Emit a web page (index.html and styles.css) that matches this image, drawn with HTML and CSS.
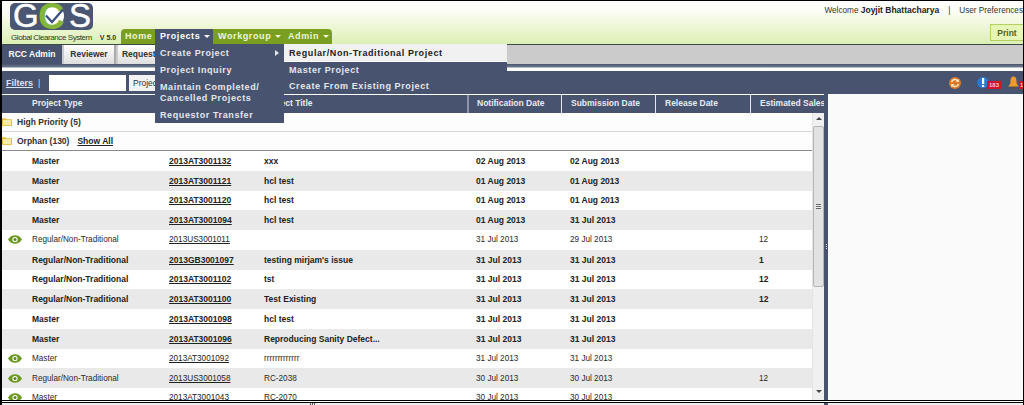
FILE: index.html
```html
<!DOCTYPE html>
<html lang="en">
<head>
<meta charset="utf-8">
<title>Global Clearance System</title>
<link rel="stylesheet" href="styles.css">
</head>
<body>
<div class="frame">
  <header class="top">
    <div class="brand">
      <svg class="logo" viewBox="0 0 83 27" width="83" height="27" aria-label="GCS logo">
        <rect x="0" y="0" width="83" height="27" rx="5" fill="#4a5672"/>
        <text x="3" y="24" class="logo-l">G</text>
        <circle cx="42" cy="13" r="12" fill="#fff"/>
        <text x="28" y="26" class="logo-c">C</text>
        <text x="59" y="24" class="logo-l">S</text>
        <path d="M36 12.500 L42 19 L53 6.500" fill="none" stroke="#39507f" stroke-width="2.200"/>
      </svg>
      <div class="brand-line"><span class="brand-name">Global Clearance System</span><span class="version">V 5.0</span></div>
    </div>
    <nav class="nav">
      <span class="nav-item nav-first">Home</span>
      <div class="nav-item nav-open">Projects <i class="caret"></i>
        <ul class="menu">
          <li class="menu-row">Create Project<i class="arrow"></i></li>
          <li>Project Inquiry</li>
          <li>Maintain Completed/<br>Cancelled Projects</li>
          <li>Requestor Transfer</li>
        </ul>
        <ul class="submenu">
          <li class="sub-active">Regular/Non-Traditional Project</li>
          <li>Master Project</li>
          <li>Create From Existing Project</li>
        </ul>
      </div>
      <span class="nav-item nav-work">Workgroup <i class="caret"></i></span>
      <span class="nav-item nav-last">Admin <i class="caret"></i></span>
    </nav>
    <div class="user">
      <div class="welcome">Welcome <b>Joyjit Bhattacharya</b><span class="pipe">|</span>User Preferences</div>
      <button class="print">Print</button>
    </div>
  </header>

  <div class="tabs">
    <span class="tab tab-active">RCC Admin</span>
    <span class="tab">Reviewer</span>
    <span class="tab">Requestor</span>
  </div>
  <div class="tabline"></div>

  <div class="filters">
    <a class="filter-link">Filters</a><span class="filter-sep">|</span>
    <input class="filter-input" type="text">
    <span class="filter-select">Project Type</span>
    <div class="alerts">
      <svg class="ico-refresh" width="12" height="12" viewBox="0 0 12 12"><circle cx="6" cy="6" r="6" fill="#d9792a"/><path d="M2.600 5.200A3.500 3.500 0 0 1 8.800 3.800M9.400 6.800A3.500 3.500 0 0 1 3.200 8.200" fill="none" stroke="#fbe7c8" stroke-width="1.500"/><path d="M9.800 1.800V5H6.800ZM2.200 10.200V7H5.200Z" fill="#fbe7c8"/></svg>
      <span class="alert">
        <svg width="12" height="13" viewBox="0 0 12 13"><circle cx="6" cy="6.500" r="5.800" fill="#2f78d0"/><rect x="5" y="2" width="2.200" height="6" fill="#fff"/><rect x="5" y="9" width="2.200" height="2" fill="#fff"/></svg>
        <em class="badge">183</em>
      </span>
      <span class="alert alert-bell">
        <svg width="13" height="13" viewBox="0 0 13 13"><path d="M6.500 0.500C4 .5 3.500 3 3.500 5.500C3.500 8 2.500 9 1 10.500H12C10.500 9 9.500 8 9.500 5.500C9.500 3 9 .5 6.500 .5Z" fill="#ef9a2c"/><rect x="5" y="11" width="3" height="1.500" fill="#7a4a14"/></svg>
        <em class="badge">1</em>
      </span>
    </div>
  </div>

  <main class="content">
    <section class="grid">
      <div class="cols head">
        <span></span><span>Project Type</span><span></span><span>Project Title</span>
        <span class="sep sep-grey">Notification Date</span><span class="sep">Submission Date</span><span class="sep">Release Date</span><span class="sep">Estimated Sales</span>
      </div>
      <div class="grid-body">
        <div class="rows">
          <div class="group"><svg class="folder" width="10" height="9" viewBox="0 0 10 9"><path d="M0 1.200H3.500L4.500 2.200H10V9H0Z" fill="#e9b944"/><rect x="1" y="3" width="8" height="5.200" fill="#fbe9a6"/></svg>High Priority (5)</div>
          <div class="group group-last"><svg class="folder" width="10" height="9" viewBox="0 0 10 9"><path d="M0 1.200H3.500L4.500 2.200H10V9H0Z" fill="#e9b944"/><rect x="1" y="3" width="8" height="5.200" fill="#fbe9a6"/></svg>Orphan (130)<a class="show-all">Show All</a></div>
          <div class="list">
            <div class="cols row strong"><span></span><span>Master</span><u>2013AT3001132</u><span>xxx</span><span class="d">02 Aug 2013</span><span class="d">02 Aug 2013</span><span></span><span></span></div>
            <div class="cols row strong"><span></span><span>Master</span><u>2013AT3001121</u><span>hcl test</span><span class="d">01 Aug 2013</span><span class="d">01 Aug 2013</span><span></span><span></span></div>
            <div class="cols row strong"><span></span><span>Master</span><u>2013AT3001120</u><span>hcl test</span><span class="d">01 Aug 2013</span><span class="d">01 Aug 2013</span><span></span><span></span></div>
            <div class="cols row strong"><span></span><span>Master</span><u>2013AT3001094</u><span>hcl test</span><span class="d">01 Aug 2013</span><span class="d">31 Jul 2013</span><span></span><span></span></div>
            <div class="cols row"><span class="eye"><svg width="14" height="9" viewBox="0 0 14 9"><path d="M0 4.500C3 -1.200 11 -1.200 14 4.500C11 10.200 3 10.200 0 4.500Z" fill="#6f9a22"/><circle cx="7" cy="4.500" r="2.600" fill="#fff"/><circle cx="7" cy="4.500" r="1.500" fill="#5c8418"/></svg></span><span>Regular/Non-Traditional</span><u>2013US3001011</u><span></span><span class="d">31 Jul 2013</span><span class="d">29 Jul 2013</span><span></span><span class="n">12</span></div>
            <div class="cols row strong"><span></span><span>Regular/Non-Traditional</span><u>2013GB3001097</u><span>testing mirjam's issue</span><span class="d">31 Jul 2013</span><span class="d">31 Jul 2013</span><span></span><span class="n">1</span></div>
            <div class="cols row strong"><span></span><span>Regular/Non-Traditional</span><u>2013AT3001102</u><span>tst</span><span class="d">31 Jul 2013</span><span class="d">31 Jul 2013</span><span></span><span class="n">12</span></div>
            <div class="cols row strong"><span></span><span>Regular/Non-Traditional</span><u>2013AT3001100</u><span>Test Existing</span><span class="d">31 Jul 2013</span><span class="d">31 Jul 2013</span><span></span><span class="n">12</span></div>
            <div class="cols row strong"><span></span><span>Master</span><u>2013AT3001098</u><span>hcl test</span><span class="d">31 Jul 2013</span><span class="d">31 Jul 2013</span><span></span><span></span></div>
            <div class="cols row strong"><span></span><span>Master</span><u>2013AT3001096</u><span>Reproducing Sanity Defect...</span><span class="d">31 Jul 2013</span><span class="d">31 Jul 2013</span><span></span><span></span></div>
            <div class="cols row"><span class="eye"><svg width="14" height="9" viewBox="0 0 14 9"><path d="M0 4.500C3 -1.200 11 -1.200 14 4.500C11 10.200 3 10.200 0 4.500Z" fill="#6f9a22"/><circle cx="7" cy="4.500" r="2.600" fill="#fff"/><circle cx="7" cy="4.500" r="1.500" fill="#5c8418"/></svg></span><span>Master</span><u>2013AT3001092</u><span>rrrrrrrrrrrrr</span><span class="d">31 Jul 2013</span><span class="d">31 Jul 2013</span><span></span><span></span></div>
            <div class="cols row"><span class="eye"><svg width="14" height="9" viewBox="0 0 14 9"><path d="M0 4.500C3 -1.200 11 -1.200 14 4.500C11 10.200 3 10.200 0 4.500Z" fill="#6f9a22"/><circle cx="7" cy="4.500" r="2.600" fill="#fff"/><circle cx="7" cy="4.500" r="1.500" fill="#5c8418"/></svg></span><span>Regular/Non-Traditional</span><u>2013US3001058</u><span>RC-2038</span><span class="d">30 Jul 2013</span><span class="d">30 Jul 2013</span><span></span><span class="n">12</span></div>
            <div class="cols row"><span class="eye"><svg width="14" height="9" viewBox="0 0 14 9"><path d="M0 4.500C3 -1.200 11 -1.200 14 4.500C11 10.200 3 10.200 0 4.500Z" fill="#6f9a22"/><circle cx="7" cy="4.500" r="2.600" fill="#fff"/><circle cx="7" cy="4.500" r="1.500" fill="#5c8418"/></svg></span><span>Master</span><u>2013AT3001043</u><span>RC-2070</span><span class="d">30 Jul 2013</span><span class="d">30 Jul 2013</span><span></span><span></span></div>
          </div>
        </div>
        <div class="scrollbar">
          <i class="sb-up"></i>
          <div class="sb-thumb"><i class="sb-grip"></i></div>
          <i class="sb-down"></i>
        </div>
      </div>
    </section>
    <div class="splitter"></div>
    <aside class="side"></aside>
  </main>
  <footer class="foot"></footer>
</div>
</body>
</html>
```

FILE: styles.css
```css
* { box-sizing: border-box; }
html, body { margin: 0; height: 405px; overflow: hidden; background: #fff; }
body { font: 8.500px "Liberation Sans", Arial, sans-serif; color: #222; }
ul { list-style: none; margin: 0; padding: 0; }

.frame {
  width: 1024px; height: 405px;
  border-top: 1px solid #000; border-left: 2px solid #000; border-right: 1px solid #000;
  display: flex; flex-direction: column; overflow: hidden;
}

/* header */
.top {
  height: 43px; flex: none; display: flex; align-items: flex-end;
  background: linear-gradient(#fff 0%, #fbfdf3 25%, #dcefb4 100%);
}
.brand { width: 119px; flex: none; align-self: stretch; padding: 2px 0 0 8px; }
.logo { display: block; }
.logo-l { font: 400 33px "Liberation Sans", sans-serif; fill: #fff; stroke: #fff; stroke-width: .5px; }
.logo-c { font: 700 37px "Liberation Sans", sans-serif; fill: #83b53a; }
.brand-line { display: flex; align-items: baseline; margin: 3px 0 0 1px; white-space: nowrap; }
.brand-name { font-size: 8px; letter-spacing: -.43px; color: #2c3a2a; }
.version { font-size: 7px; font-weight: 700; margin-left: 8px; color: #333; }

.nav { display: flex; height: 15px; color: #fff; font-weight: 700; font-size: 9px; letter-spacing: .6px; }
.nav-item { display: block; height: 15px; line-height: 15px; padding: 0 5px; background: #7a9f20; position: relative; white-space: nowrap; color: #eef6d8; }
.nav-first { border-radius: 4px 0 0 0; width: 34px; padding: 0 0 0 4px; }
.nav-work { width: 69px; padding: 0 0 0 5px; }
.nav-last { border-radius: 0 4px 0 0; width: 50px; padding: 0 0 0 6px; }
.nav-open { background: #47536f; color: #fff; width: 58px; }
.caret { display: inline-block; width: 0; height: 0; border: 3px solid transparent; border-top: 3.500px solid currentColor; border-bottom: 0; vertical-align: 1px; margin-left: 1px; }

.menu, .submenu { position: absolute; top: 15px; background: #47536f; z-index: 5; color: #e4e7ee; font-size: 9px; line-height: 11px; letter-spacing: .6px; }
.menu { left: 0; width: 129px; padding: .5px 0 0; height: 79px; }
.menu li { padding: 3px 5px; min-height: 17px; }
.menu-row { display: flex; justify-content: space-between; align-items: center; }
.arrow { width: 0; height: 0; border: 3px solid transparent; border-left: 4px solid #e4e7ee; border-right: 0; }
.submenu { left: 129px; width: 223px; height: 50px; }
.submenu li { padding: 3px 5px; height: 16.300px; }
.sub-active { background: #f1f1f1; color: #222; height: 18px !important; padding-top: 4px !important; border-bottom: 1px solid #fff; }

.user { margin-left: auto; align-self: stretch; display: flex; flex-direction: column; align-items: flex-end; }
.welcome { white-space: nowrap; padding-top: 4px; color: #333; height: 16px; line-height: 11px; font-size: 8.200px; }
.welcome b { color: #222; font-size: 8.500px; }
.pipe { margin: 0 9px; }
.print { margin-top: 7px; width: 33px; height: 17px; padding: 0; border: 1px solid #b4cf62; border-right: 0; background: #e6f6b4; font: 700 8.500px "Liberation Sans", sans-serif; color: #54622f; }

/* tabs */
.tabs { height: 20px; flex: none; display: flex; background: #cbcbcb; border-top: 1px solid #3c4a46; }
.tab { width: 52px; margin-left: 2px; padding-top: 1px; height: 19px; line-height: 17px; text-align: center; font-weight: 700; background: linear-gradient(#fff, #dedede); border-right: 2px solid #aaa; color: #333; }
.tab-active { width: 60px; margin-left: 0; background: #47536f; color: #fff; border: 0; }
.tabline { height: 7px; flex: none; background: linear-gradient(#47536f 0, #6e7689 40%, #fff 60%, #fff 100%); }

/* filters */
.filters { height: 23px; flex: none; background: #47536f; display: flex; align-items: center; padding-left: 4px; color: #dde; }
.filter-link { color: #dfe3ef; text-decoration: underline; font-weight: 700; font-size: 9px; width: 32px; }
.filter-sep { width: 11px; }
.filter-input { width: 77px; height: 16px; border: 0; background: #fff; padding: 0; }
.filter-select { width: 80px; height: 16px; line-height: 16px; margin-left: 3px; background: #f2f2f2; color: #333; padding-left: 4px; overflow: hidden; }
.alerts { margin-left: auto; display: flex; align-items: center; padding-right: 1px; }
.ico-refresh { margin-right: 16px; }
.alert { display: flex; width: 30px; position: relative; }
.alert-bell { width: 15px; }
.badge { position: absolute; left: 10px; top: 5px; height: 8px; min-width: 13px; padding: 0 2px; background: #d2142a; color: #f7c6cc; font: 700 6px/8px "Liberation Sans", sans-serif; text-align: center; }
.alert-bell .badge { left: 12px; min-width: 3px; padding: 0 0 0 1px; overflow: hidden; }

/* grid */
.content { flex: 1; min-height: 0; display: flex; }
.grid { width: 822px; flex: none; display: flex; flex-direction: column; min-height: 0; }
.cols { display: grid; grid-template-columns: 30px 137px 95px 203px 94px 94px 95px 74px; align-items: center; white-space: nowrap; }
.head { height: 19px; flex: none; background: #47536f; color: #e9ebf1; font-weight: 700; overflow: hidden; border-top: 1px solid #fff; }
.head span { height: 100%; line-height: 17px; }
.sep { border-left: 1px solid #e8e8ee; padding-left: 9px; }
.sep-grey { border-left: 2px solid #8d94a6; padding-left: 8px; }

.grid-body { flex: 1; min-height: 0; display: flex; }
.rows { width: 810px; flex: none; overflow: hidden; background: #fff; }
.group { height: 19px; display: flex; align-items: center; font-weight: 700; color: #333; background: #fdfdfd; border-bottom: 1px solid #d8d8d8; padding: 0 0 1px 15px; }
.group-last { border-bottom: 1px solid #8a8a8a; }
.show-all { margin-left: 8px; text-decoration: underline; color: #222; }
.folder { margin: 0 5px 0 -15px; flex: none; }
.row { height: 19.750px; background: #fff; color: #2a2a2a; font-size: 8.200px; }
.row:nth-child(even) { background: #e9e9e9; }
.row > * { overflow: hidden; }
.row u { color: #222; }
.strong { font-weight: 700; color: #222; font-size: 8.500px; }
.eye { padding-left: 6px; display: flex; align-items: center; }
.d { padding-left: 9px; }
.n { padding-left: 9px; }

.scrollbar { width: 12px; flex: none; background: #f0f0f0; display: flex; flex-direction: column; align-items: center; border-left: 1px solid #e4e4e4; }
.sb-up, .sb-down { width: 0; height: 0; border: 3px solid transparent; flex: none; }
.sb-up { border-top: 0; border-bottom: 3px solid #444; margin-top: 4px; }
.sb-down { border-bottom: 0; border-top: 3px solid #444; margin-top: auto; margin-bottom: 7px; }
.sb-thumb { width: 11px; height: 161px; margin-top: 6px; background: #e2e2e2; border: 1px solid #b5b5b5; border-radius: 2px; display: flex; align-items: center; justify-content: center; }
.sb-grip { width: 5px; height: 5px; background: repeating-linear-gradient(#666 0 1px, #eee 1px 2px); }

.splitter { width: 4px; flex: none; background: #47536f; display: flex; align-items: center; justify-content: center; }
.splitter::after { content: ""; width: 1px; height: 6px; background: repeating-linear-gradient(#d8dce6 0 1px, transparent 1px 2px); }
.side { flex: 1; background: #fafafa; }

.foot {
  height: 5px; flex: none; border-top: 1px solid #000;
  background:
    linear-gradient(#47536f, #47536f) 822px 0 / 4px 100% no-repeat,
    repeating-linear-gradient(90deg, #555 0 1px, transparent 1px 2px) 308px 0 / 6px 100% no-repeat,
    #eee;
  box-shadow: inset 0 1px 0 #fff, inset 0 2px 0 #000;
}
```
